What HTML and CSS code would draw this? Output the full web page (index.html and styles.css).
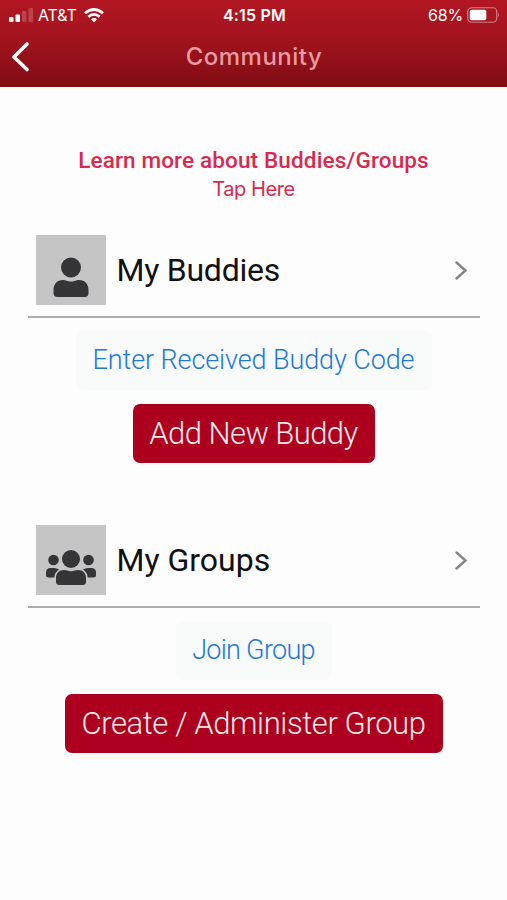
FILE: index.html
```html
<!DOCTYPE html>
<html lang="en">
<head>
<meta charset="utf-8">
<title>Community</title>
<link rel="stylesheet" href="styles.css">
</head>
<body>
<header class="top">
  <div class="status">
    <div class="carrier">
      <svg class="signal" width="24" height="14" viewBox="0 0 24 14" fill="#fff"><rect x="0" y="9" width="4.5" height="5" rx="1"/><rect x="6.5" y="6.500" width="4.5" height="7.500" rx="1"/><rect x="13" y="3" width="4.500" height="11" rx="1" opacity=".2"/><rect x="19.500" y="0" width="4.500" height="14" rx="1" opacity=".2"/></svg>
      <span class="network">AT&amp;T</span>
      <svg class="wifi" width="20" height="15" viewBox="0 0 20 15" fill="none" stroke="#fff" stroke-width="2.700"><path d="M1 5.300Q10-2.300 19 5.300M4.300 8.800Q10 4 15.700 8.800"/><path d="M7 11.300Q10 8.700 13 11.300L10 14.500Z" fill="#fff" stroke="none"/></svg>
    </div>
    <span class="clock">4:15 PM</span>
    <div class="power">
      <span class="percent">68%</span>
      <svg width="33" height="16" viewBox="0 0 33 16"><rect x=".75" y=".75" width="29" height="14.500" rx="4" fill="none" stroke="#fff" stroke-opacity=".45" stroke-width="1.200"/><rect x="2.800" y="2.800" width="16.500" height="10.400" rx="1.800" fill="#fff"/><path d="M31.200 5.500Q33 8 31.200 10.500Z" fill="#fff" opacity=".55"/></svg>
    </div>
  </div>
  <div class="nav">
    <svg class="back" width="20" height="32" viewBox="0 0 20 32" fill="none" stroke="#fff" stroke-width="3.600" stroke-linecap="round" stroke-linejoin="round"><path d="M17 3L4 16L17 28.500"/></svg>
    <h1>Community</h1>
  </div>
</header>
<main>
  <a class="learn"><strong>Learn more about Buddies/Groups</strong><span>Tap Here</span></a>
  <section class="buddies">
    <div class="row">
      <svg class="avatar" viewBox="0 0 70 70" fill="#353538"><circle cx="35" cy="32.500" r="10"/><path d="M27 45C30 45 31 46.500 35 46.500S40 45 43 45C49 45 52.500 49 52.500 55V58Q52.500 62 48.500 62H21.500Q17.500 62 17.500 58V55C17.500 49 21 45 27 45Z"/></svg>
      <h2 class="t-buddies">My Buddies</h2>
      <svg class="chevron" width="14" height="20" viewBox="0 0 14 20"><path d="M2.500 2.500L11.500 10.500L2.500 18.500"/></svg>
    </div>
    <button class="link wide">Enter Received Buddy Code</button>
    <button class="primary add">Add New Buddy</button>
  </section>
  <section class="groups">
    <div class="row">
      <svg class="avatar" viewBox="0 0 70 70" fill="#353538"><circle cx="17.500" cy="35" r="5.300"/><circle cx="52.500" cy="35" r="5.300"/><circle cx="35" cy="34" r="9"/><path d="M14.500 43H18Q21 43 23 44.500Q18.500 47.500 18.300 52.500H12.500Q10 52.500 10 50V47.500Q10 43 14.500 43ZM55.500 43H52Q49 43 47 44.500Q51.500 47.500 51.700 52.500H57.500Q60 52.500 60 50V47.500Q60 43 55.500 43Z"/><path d="M28 45C31 45 32 46.200 35 46.200S39 45 42 45C47 45 50 48.500 50 53V56.500Q50 60 46.500 60H23.500Q20 60 20 56.500V53C20 48.500 23 45 28 45Z"/></svg>
      <h2 class="t-groups">My Groups</h2>
      <svg class="chevron" width="14" height="20" viewBox="0 0 14 20"><path d="M2.500 2.500L11.500 10.500L2.500 18.500"/></svg>
    </div>
    <button class="link join">Join Group</button>
    <button class="primary create">Create / Administer Group</button>
  </section>
</main>
</body>
</html>
```
FILE: styles.css
```css
* { box-sizing: border-box; }
body { margin: 0; min-height: 900px; background: #fdfdfd; font-family: Roboto, "Liberation Sans", sans-serif; }
h1, h2 { margin: 0; font-weight: 400; }
h2, span, strong, button { white-space: nowrap; }
svg { display: block; flex: none; }
.top { height: 87px; background: linear-gradient(#b11722, #a2131e 45%, #7f0c13); color: #fff; font-family: Inter, sans-serif; }
.status { display: grid; grid-template-columns: 1fr auto 1fr; align-items: center; height: 30px; padding: 0 7px 0 9px; }
.carrier, .power { display: flex; align-items: center; }
.signal { margin-right: 5px; }
.network { width: 39px; font-size: 16px; letter-spacing: -.1px; }
.wifi { margin-left: 7px; }
.clock { font-size: 16px; font-weight: 600; letter-spacing: .2px; }
.power { justify-content: flex-end; gap: 4px; }
.percent { font-size: 16px; letter-spacing: -.2px; }
.nav { display: grid; grid-template-columns: 40px 1fr 40px; align-items: center; height: 53px; padding: 0 9px 0 10px; }
h1 { text-align: center; font-size: 24px; font-weight: 500; letter-spacing: .5px; color: #e99ba0; }
.learn { display: flex; flex-direction: column; align-items: center; padding-top: 59px; color: #d9294f; }
.learn strong { font-size: 22.500px; line-height: 28px; font-weight: 500; letter-spacing: .15px; }
.learn span { font: 20px/30px Inter, sans-serif; letter-spacing: -.4px; }
section { display: flex; flex-direction: column; align-items: center; height: 290px; }
.buddies { margin-top: 31px; }
.row { display: flex; align-items: center; width: 452px; height: 83px; padding: 0 12px 12px 8px; border-bottom: 2px solid #adadad; }
.avatar { width: 70px; height: 70px; background: #c5c5c6; }
h2 { flex: 1; margin-left: 11px; font-size: 32px; color: #111; line-height: 40px; }
.t-buddies { letter-spacing: -.25px; }
.chevron { fill: none; stroke: #858585; stroke-width: 2.400; stroke-linecap: round; }
button { display: flex; align-items: center; justify-content: center; border: 0; padding: 0; font-family: inherit; height: 59px; border-radius: 7px; }
.link { margin-top: 13px; padding-bottom: 2px; background: #f9fafa; color: #2179d5; font-size: 27px; font-weight: 350; letter-spacing: -.1px; }
.primary { margin-top: 14px; background: #ac001e; color: #fde9eb; font-size: 31px; font-weight: 350; letter-spacing: -.55px; }
.wide { width: 356px; }
.add { width: 242px; }
.join { width: 156px; letter-spacing: -.7px; }
.create { width: 378px; letter-spacing: -.4px; }
```
